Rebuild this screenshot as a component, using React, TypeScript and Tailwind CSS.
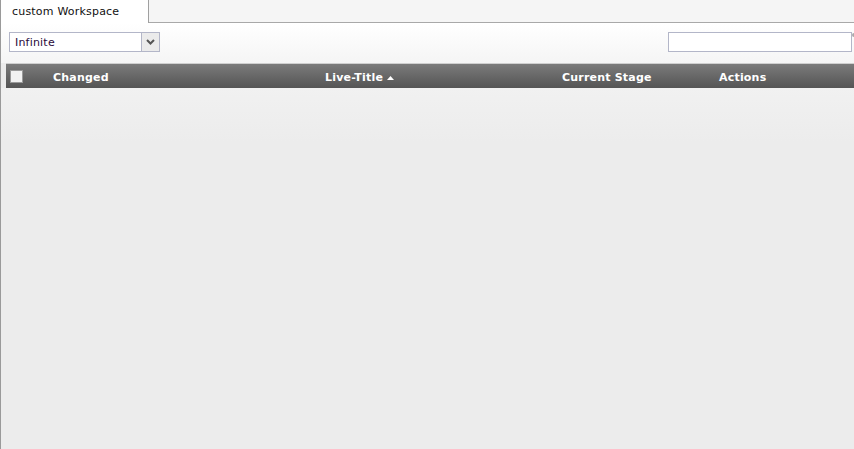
import React from "react";

export default function App() {
  const font = { fontFamily: '"DejaVu Sans", Verdana, sans-serif' };
  return (
    <div className="w-[854px] h-[449px] overflow-hidden flex flex-col border-l border-[#9a9a9a] bg-[#ececec]" style={font}>
      {/* tab bar */}
      <div className="flex h-[23px] bg-[#f5f5f5] shrink-0">
        <div className="w-[148px] h-[23px] bg-white border-r border-[#a0a0a0] flex items-center pl-[11px] text-[11px] tracking-[0.2px] text-[#111] pt-[1px]">
          custom Workspace
        </div>
        <div className="flex-1 border-b border-[#a8a8a8]" />
      </div>
      {/* toolbar */}
      <div className="h-[40px] shrink-0 bg-gradient-to-b from-white to-[#f5f5f5] flex items-start justify-between pt-[9px] pl-[8px]">
        <div className="flex w-[151px] h-[20px] border border-[#b3b6c8] bg-white">
          <div className="flex-1 flex items-center pl-[5px] pt-[2px] text-[11px] tracking-[0.2px] text-[#2a0a3a]">Infinite</div>
          <div className="w-[18px] bg-[#ebebeb] border-l border-[#b3b6c8] flex items-center justify-center">
            <svg width="9" height="6" viewBox="0 0 9 6">
              <path d="M1 1 L4.5 4.5 L8 1" stroke="#555" strokeWidth="2" fill="none" />
            </svg>
          </div>
        </div>
        <div className="flex items-start">
          <div className="w-[184px] h-[20px] border border-[#b3b6c8] bg-white" />
          <div className="w-[2px] h-[8px] overflow-hidden">
            <svg width="4" height="8" viewBox="0 0 4 8"><circle cx="2" cy="3" r="2" fill="#aaa" /></svg>
          </div>
        </div>
      </div>
      {/* table header */}
      <div className="ml-[5px] shrink-0 border-t border-[#cfcfcf] h-[25px] bg-gradient-to-b from-[#7b7b7b] to-[#555555] flex items-center pt-[4px] text-white font-bold text-[11px] tracking-[0.2px]">
        <div className="w-[47px] pl-[4px] flex items-center -mt-[3px]">
          <div className="w-[13px] h-[13px] bg-[#f2f2f2] border border-[#9a9a9a]" />
        </div>
        <div className="w-[272px]">Changed</div>
        <div className="w-[237px] flex items-center gap-[4px]">
          Live-Title
          <svg width="7" height="4" viewBox="0 0 7 4"><path d="M0 4 L3.5 0 L7 4 Z" fill="#fff" /></svg>
        </div>
        <div className="w-[157px]">Current Stage</div>
        <div>Actions</div>
      </div>
      {/* body */}
      <div className="flex-1 bg-[#ececec]">
        <div className="h-[55px] bg-gradient-to-b from-[#f1f1f1] to-[#ececec]" />
      </div>
    </div>
  );
}
